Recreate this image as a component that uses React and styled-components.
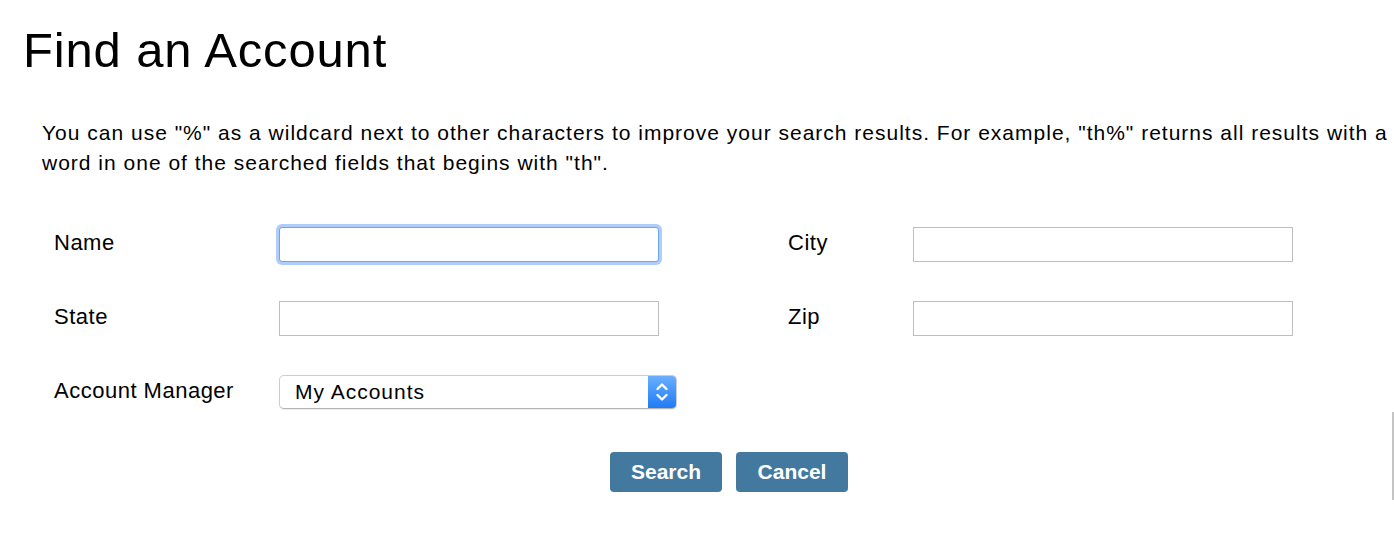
import React from 'react';
import styled, { createGlobalStyle } from 'styled-components';

const GlobalStyle = createGlobalStyle`
  html, body {
    margin: 0;
    padding: 0;
    background: #ffffff;
    overflow: hidden;
  }
  body {
    font-family: "Liberation Sans", Arial, sans-serif;
    color: #000;
  }
`;

const Page = styled.div`
  position: relative;
  width: 1394px;
  height: 542px;
  padding-top: 26px;
  box-sizing: border-box;
`;

const Title = styled.h1`
  margin: 0 0 0 23px;
  font-size: 49px;
  line-height: 49px;
  font-weight: 400;
  letter-spacing: 0.85px;
`;

const Hint = styled.p`
  margin: 43px 0 0 42px;
  width: 1362px;
  font-size: 21px;
  line-height: 30px;
  letter-spacing: 1px;
`;

const FormGrid = styled.div`
  display: grid;
  grid-template-columns: 225px 380px 129px 125px 380px;
  grid-auto-rows: 35px;
  row-gap: 39px;
  margin: 49px 0 0 54px;
  align-items: start;
`;

const Label = styled.label`
  font-size: 22px;
  line-height: 31px;
  letter-spacing: 0.5px;
  white-space: nowrap;
`;

const TextInput = styled.input`
  box-sizing: border-box;
  width: 380px;
  height: 35px;
  margin: 0;
  padding: 0 6px;
  border: 1px solid ${(p) => (p.$focused ? '#6ea5ef' : '#bebebe')};
  border-radius: ${(p) => (p.$focused ? '3px' : '0')};
  box-shadow: ${(p) => (p.$focused ? '0 0 0 3px rgba(120, 172, 245, 0.6)' : 'none')};
  outline: none;
  font-size: 18px;
  background: #fff;
`;

const SelectBox = styled.div`
  box-sizing: border-box;
  width: 398px;
  height: 34px;
  display: flex;
  align-items: center;
  justify-content: space-between;
  border: 1px solid #cdcdcd;
  border-bottom-color: #b4b4b4;
  border-radius: 5px;
  background: #fff;
  box-shadow: 0 1px 1px rgba(0, 0, 0, 0.08);
  overflow: hidden;
`;

const SelectText = styled.span`
  padding-left: 15px;
  font-size: 21px;
  letter-spacing: 1px;
`;

const Stepper = styled.span`
  width: 28px;
  height: 100%;
  display: flex;
  align-items: center;
  justify-content: center;
  background: linear-gradient(#6aaffd, #1f7bf6);
`;

const Actions = styled.div`
  display: flex;
  gap: 14px;
  margin: 42px 0 0 610px;
`;

const Button = styled.button`
  width: 112px;
  height: 40px;
  border: none;
  border-radius: 4px;
  background: #44799f;
  color: #fff;
  font-family: "Liberation Sans", Arial, sans-serif;
  font-size: 21px;
  font-weight: 700;
  cursor: pointer;
`;

const ScrollEdge = styled.div`
  position: absolute;
  right: 0;
  top: 412px;
  width: 2px;
  height: 88px;
  background: #c4c4c4;
`;

const Chevrons = () => (
  <svg width="14" height="24" viewBox="0 0 14 24" fill="none" stroke="#fff" strokeWidth="2.4" strokeLinecap="round" strokeLinejoin="round">
    <polyline points="2.5,9 7,4.5 11.5,9" />
    <polyline points="2.5,15 7,19.5 11.5,15" />
  </svg>
);

const App = () => (
  <Page>
    <GlobalStyle />
    <Title>Find an Account</Title>
    <Hint>
      You can use "%" as a wildcard next to other characters to improve your search results. For example, "th%" returns all results with a word in one of the searched fields that begins with "th".
    </Hint>
    <FormGrid>
      <Label htmlFor="name">Name</Label>
      <TextInput id="name" $focused />
      <span />
      <Label htmlFor="city">City</Label>
      <TextInput id="city" />

      <Label htmlFor="state">State</Label>
      <TextInput id="state" />
      <span />
      <Label htmlFor="zip">Zip</Label>
      <TextInput id="zip" />

      <Label>Account Manager</Label>
      <SelectBox>
        <SelectText>My Accounts</SelectText>
        <Stepper>
          <Chevrons />
        </Stepper>
      </SelectBox>
    </FormGrid>
    <Actions>
      <Button>Search</Button>
      <Button>Cancel</Button>
    </Actions>
    <ScrollEdge />
  </Page>
);

export default App;
